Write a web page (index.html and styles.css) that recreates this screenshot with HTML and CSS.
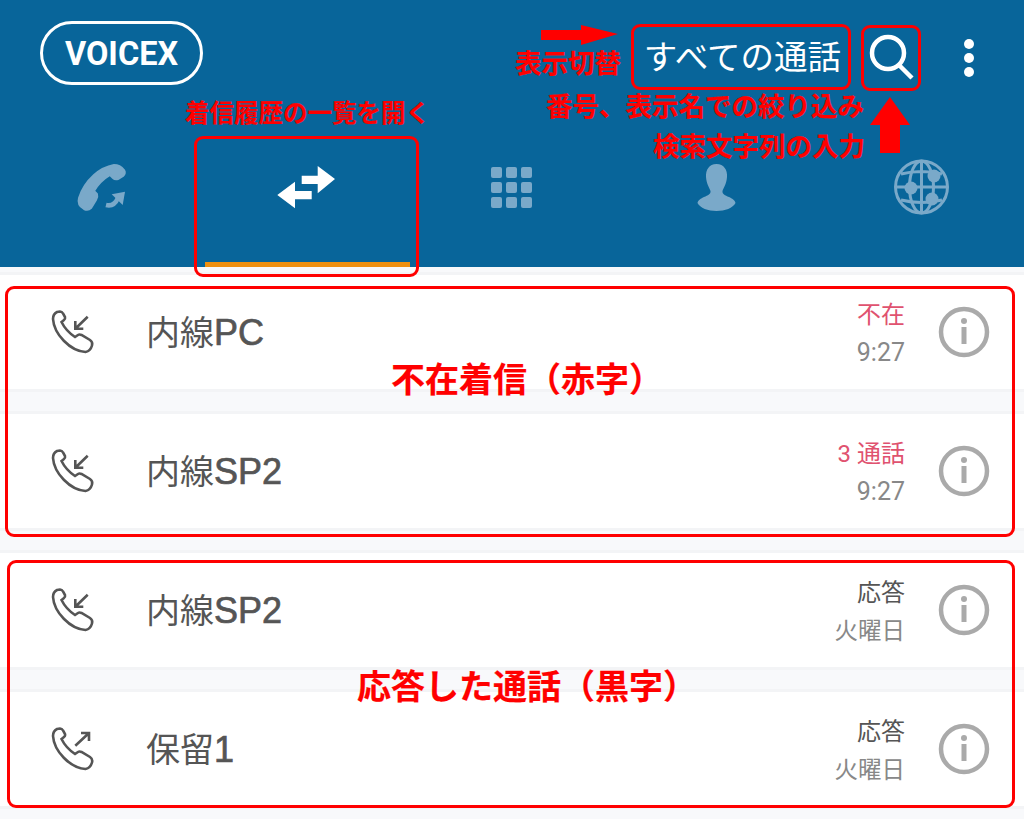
FILE: index.html
```html
<!DOCTYPE html>
<html lang="ja">
<head>
    <meta charset="UTF-8">
    <meta name="viewport" content="width=device-width, initial-scale=1.0">
    <title>VOICEX 通話履歴</title>
    <link rel="stylesheet" href="styles.css">
</head>
<body>
    <svg class="defs" width="0" height="0">
        <symbol id="phone" viewBox="0 0 55 55">
            <path d="M11 6 L14 5.5 Q16 5.5 17 7.5 L19 11 Q19.5 13 18 14 L15.5 16 Q20 25 29 31 L32 29 Q33.5 28 35.5 29 L44 34 Q47 36 46 39.5 Q44.5 45 39.5 46 C24 45 8 28 7 13 Q7 8 11 6 Z"/>
        </symbol>
        <symbol id="info" viewBox="0 0 52 52">
            <circle class="info-ring" cx="26" cy="26" r="23"/>
            <circle class="info-dot" cx="26" cy="15" r="3"/>
            <rect class="info-dot" x="23.5" y="21" width="5" height="17"/>
        </symbol>
    </svg>

    <header class="header">
        <div class="topbar">
            <div class="logo">VOICEX</div>
            <div class="topbar-right">
                <div class="filter">すべての通話</div>
                <svg class="search" width="48" height="50" viewBox="0 0 48 50">
                    <circle cx="20" cy="21" r="16"/>
                    <path d="M31 33 L44 46"/>
                </svg>
                <div class="dots"><span></span><span></span><span></span></div>
            </div>
        </div>
        <nav class="tabs">
            <div class="tab">
                <svg width="65" height="65" viewBox="0 0 65 65">
                    <path class="tab-fill tab-phone" d="M44 10 Q50 10 54 15 Q56 18 53 21 L48 24 Q45 25 43 23 L40 20 Q30 26 24 36 L27 39 Q28 42 26 45 L21 53 Q18 56 14 54 Q7 50 9 43 Q13 30 24 20 Q33 12 44 10 Z"/>
                    <path class="tab-line" d="M36 50 Q44 52 48 43"/>
                    <path class="tab-fill" d="M41.7 39.3 L55 36.7 L52.7 50 Z"/>
                </svg>
            </div>
            <div class="tab active">
                <svg width="75" height="65" viewBox="0 0 75 65">
                    <path class="swap" d="M31.7 20.7 H47.7 V11 L65 24 L47.7 38.3 V29 H31.7 Z"/>
                    <path class="swap" d="M41.7 36 H25 V26.7 L7.3 40 L25 53.3 V44.3 H41.7 Z"/>
                </svg>
            </div>
            <div class="tab">
                <div class="keypad">
                    <span></span><span></span><span></span>
                    <span></span><span></span><span></span>
                    <span></span><span></span><span></span>
                </div>
            </div>
            <div class="tab">
                <svg width="65" height="65" viewBox="0 0 65 65">
                    <path class="tab-fill" d="M32.5 9 C40 9 43.5 15 43 22 C42.5 29 39.5 33 38.5 36 C38 39 41 40.5 45 42 C48 43.5 51 45 51.5 48 C49 53 41 56 32.5 56 C24 56 16 53 13.5 48 C14 45 17 43.5 20 42 C24 40.5 27 39 26.5 36 C25.5 33 22.5 29 22 22 C21.5 15 25 9 32.5 9 Z"/>
                </svg>
            </div>
            <div class="tab">
                <svg width="70" height="65" viewBox="0 0 70 65">
                    <g class="globe">
                        <circle cx="34.5" cy="32" r="26"/>
                        <ellipse cx="34.5" cy="32" rx="12" ry="26"/>
                        <path d="M34.5 6 V58 M8.5 32 H60.5 M14 19 Q34.5 14 55 19 M14 45 Q34.5 50 55 45"/>
                    </g>
                    <circle class="tab-fill" cx="47" cy="21" r="6.5"/>
                    <circle class="tab-fill" cx="24" cy="33" r="6.5"/>
                    <circle class="tab-fill" cx="45" cy="44" r="6.5"/>
                </svg>
            </div>
        </nav>
    </header>

    <main class="list">
        <div class="row">
            <svg class="call-icon" width="55" height="55" viewBox="0 0 55 55">
                <use href="#phone"/>
                <path d="M41.7 10.7 L29.3 22.7 M29.3 15 V22.7 H37.3"/>
            </svg>
            <div class="name">内線<span class="latin">PC</span></div>
            <div class="meta">
                <div class="status missed">不在</div>
                <div class="time">9:27</div>
            </div>
            <svg class="info" width="52" height="52"><use href="#info"/></svg>
        </div>
        <div class="row">
            <svg class="call-icon" width="55" height="55" viewBox="0 0 55 55">
                <use href="#phone"/>
                <path d="M41.7 10.7 L29.3 22.7 M29.3 15 V22.7 H37.3"/>
            </svg>
            <div class="name">内線<span class="latin">SP2</span></div>
            <div class="meta">
                <div class="status missed">3 通話</div>
                <div class="time">9:27</div>
            </div>
            <svg class="info" width="52" height="52"><use href="#info"/></svg>
        </div>
        <div class="row">
            <svg class="call-icon" width="55" height="55" viewBox="0 0 55 55">
                <use href="#phone"/>
                <path d="M41.7 10.7 L29.3 22.7 M29.3 15 V22.7 H37.3"/>
            </svg>
            <div class="name">内線<span class="latin">SP2</span></div>
            <div class="meta">
                <div class="status">応答</div>
                <div class="time day">火曜日</div>
            </div>
            <svg class="info" width="52" height="52"><use href="#info"/></svg>
        </div>
        <div class="row">
            <svg class="call-icon" width="55" height="55" viewBox="0 0 55 55">
                <use href="#phone"/>
                <path d="M29.3 22.7 L43 10 M35 10 H43 V18"/>
            </svg>
            <div class="name">保留<span class="latin">1</span></div>
            <div class="meta">
                <div class="status">応答</div>
                <div class="time day">火曜日</div>
            </div>
            <svg class="info" width="52" height="52"><use href="#info"/></svg>
        </div>
    </main>

    <!-- 赤い注釈 -->
    <div class="box box-filter"></div>
    <div class="box box-search"></div>
    <div class="box box-tab"></div>
    <div class="box box-missed"></div>
    <div class="box box-answered"></div>

    <svg class="note-arrow arrow-right" width="80" height="24" viewBox="0 0 80 24">
        <path d="M3 7 H43 V2 L80 11 L43 22 V17 H3 Z"/>
    </svg>
    <svg class="note-arrow arrow-up" width="40" height="58" viewBox="0 0 40 58">
        <path d="M20 0 L40 28 H30 V56 H10 V28 H0 Z"/>
    </svg>

    <div class="note note-switch">表示切替</div>
    <div class="note note-narrow">番号、表示名での絞り込み</div>
    <div class="note note-input">検索文字列の入力</div>
    <div class="note note-open">着信履歴の一覧を開く</div>
    <div class="note note-big note-missed">不在着信（赤字）</div>
    <div class="note note-big note-answered">応答した通話（黒字）</div>
</body>
</html>
```

FILE: styles.css
```css
* {
    margin: 0;
    padding: 0;
    box-sizing: border-box;
}

body {
    position: relative;
    height: 819px;
    overflow: hidden;
    font-family: Roboto, 'Noto Sans CJK JP', sans-serif;
    background: #f8f9fb;
}

.defs {
    display: block;
    height: 0;
}

/* ヘッダー */
.header {
    height: 267px;
    background: #08659a;
    color: #fff;
}

.topbar {
    height: 137px;
    display: flex;
    justify-content: space-between;
    align-items: flex-start;
    padding: 21px 50px 0 40px;
}

.logo {
    width: 163px;
    height: 64px;
    padding-top: 2px;
    border: 3px solid #fff;
    border-radius: 32px;
    display: flex;
    align-items: center;
    justify-content: center;
    font-size: 32.5px;
    font-weight: 700;
}

.topbar-right {
    display: flex;
    align-items: flex-start;
}

.filter {
    font-size: 33.5px;
    font-weight: 400;
    line-height: 38px;
    margin-top: 18px;
    margin-right: 27px;
}

.search {
    margin-top: 11px;
    margin-right: 48px;
    fill: none;
    stroke: #fff;
    stroke-width: 4.5;
}

.dots {
    display: flex;
    flex-direction: column;
    gap: 4px;
    margin-top: 18px;
}

.dots span {
    width: 10px;
    height: 10px;
    border-radius: 50%;
    background: #fff;
}

.tabs {
    display: flex;
    height: 130px;
}

.tab {
    flex: 1;
    display: flex;
    justify-content: center;
    align-items: flex-start;
    padding-top: 18px;
    border-bottom: 5px solid transparent;
}

.tab.active {
    border-bottom-color: #f0900f;
}

.tab-fill {
    fill: #7aa9c9;
}

.tab-phone {
    stroke: #7aa9c9;
    stroke-width: 2;
}

.tab-line {
    fill: none;
    stroke: #7aa9c9;
    stroke-width: 4.5;
}

.swap {
    fill: #fff;
}

.keypad {
    display: grid;
    grid-template-columns: repeat(3, 11px);
    grid-auto-rows: 11px;
    gap: 4px;
    margin-top: 12px;
}

.keypad span {
    background: #7aa9c9;
    border-radius: 2px;
}

.globe {
    fill: none;
    stroke: #7aa9c9;
    stroke-width: 3;
}

/* 通話リスト */
.list {
    padding-top: 5px;
}

.row {
    height: 120px;
    margin-bottom: 19px;
    padding: 0 34px 0 46px;
    display: flex;
    align-items: center;
    background: #fff;
    border-top: 3px solid #f3f4f6;
    border-bottom: 3px solid #f3f4f6;
}

.call-icon {
    flex-shrink: 0;
    margin-top: 2px;
    fill: none;
    stroke: #555;
    stroke-width: 2.6;
}

.name {
    flex: 1;
    margin-left: 45px;
    margin-bottom: 3px;
    font-size: 34px;
    font-weight: 400;
    color: #555;
}

.latin {
    font-family: 'Liberation Sans', sans-serif;
    font-size: 36px;
    -webkit-text-stroke: 0.7px #555;
}

.meta {
    text-align: right;
    margin-right: 33px;
    margin-top: 4px;
    line-height: 38px;
}

.status {
    font-size: 24px;
    color: #555;
}

.status.missed {
    color: #e0526f;
}

.time {
    font-size: 25px;
    color: #888;
}

.time.day {
    font-size: 23.5px;
}

.info {
    flex-shrink: 0;
}

.info-ring {
    fill: none;
    stroke: #aaa;
    stroke-width: 4.5;
}

.info-dot {
    fill: #aaa;
}

/* 注釈 */
.box {
    position: absolute;
    border: 3px solid #f00;
    border-radius: 9px;
}

.box-filter { left: 631px; top: 24px; width: 220px; height: 66px; }
.box-search { left: 861px; top: 25px; width: 60px; height: 66px; }
.box-tab { left: 194px; top: 136px; width: 225px; height: 141px; }
.box-missed { left: 5px; top: 286px; width: 1010px; height: 251px; }
.box-answered { left: 7px; top: 560px; width: 1008px; height: 248px; }

.note-arrow {
    position: absolute;
    fill: #f00;
}

.arrow-right { left: 538px; top: 23px; }
.arrow-up { left: 870px; top: 97px; }

.note {
    position: absolute;
    color: #f00;
    font-family: 'Noto Sans CJK JP', sans-serif;
    font-size: 26.5px;
    font-weight: 700;
    line-height: 32px;
    white-space: nowrap;
    -webkit-text-stroke: 0.2px #f00;
}

.note-switch { left: 515px; top: 46px; }
.note-narrow { left: 546px; top: 89px; }
.note-input { left: 653px; top: 129px; }
.note-open { left: 185px; top: 96px; font-size: 24.5px; }

.note-big {
    font-size: 34px;
    line-height: 40px;
}

.note-missed { left: 391px; top: 358px; }
.note-answered { left: 357px; top: 665px; }
```
